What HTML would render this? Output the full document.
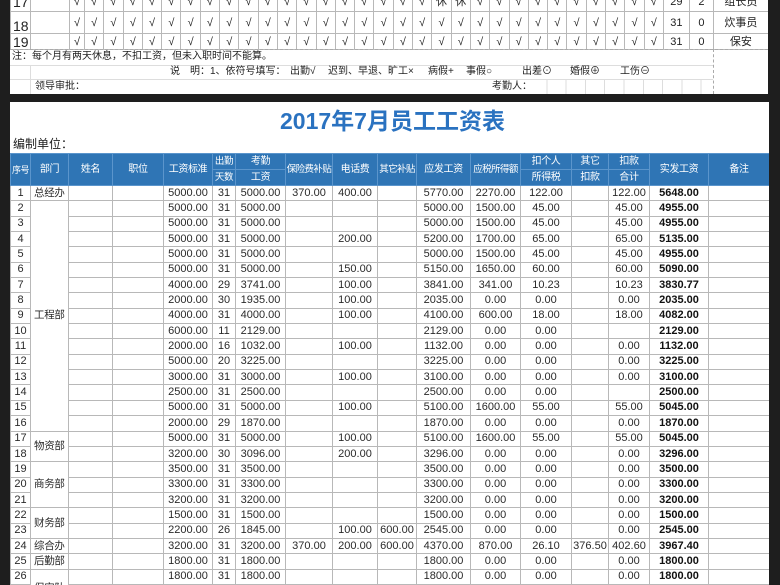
<!DOCTYPE html>
<html><head><meta charset="utf-8">
<style>
*{margin:0;padding:0;box-sizing:border-box}
body{width:780px;height:585px;overflow:hidden;background:#1e1e1e;position:relative;font-family:"Liberation Sans","Noto Sans CJK SC",sans-serif;color:#222}
.sheet{position:absolute;background:#fff;overflow:hidden}
table{border-collapse:collapse;table-layout:fixed;position:absolute}
td{border:1px solid #b8b8b8;text-align:center;padding:0;white-space:nowrap;overflow:hidden}
#top td{font-size:11px;line-height:14px}
#top td.n{font-size:14px;text-align:left;padding-left:2px}
#sal td{font-size:11px;height:15.35px;line-height:13px;color:#2a2a2a}
#sal th{background:#2f75b5;color:#fff;font-weight:normal;font-size:10px;letter-spacing:-0.4px;border:1px solid #5b95cc;height:16px;line-height:14px;padding:0;white-space:nowrap;overflow:hidden}
#sal td.b{font-weight:bold;color:#111}
#sal td.l{text-align:left;padding-left:3px;font-size:10.5px;letter-spacing:-0.3px}
.t{position:absolute;font-size:10px;white-space:nowrap;line-height:14px}
</style></head><body>

<div class="sheet" style="left:10px;top:0;width:758px;height:94px">
<table id="top" style="left:0;top:-8px;width:758px">
<colgroup><col style="width:20px"><col style="width:39px"><col style="width:15px">
<col span="30" style="width:19.3px"><col style="width:26px"><col style="width:24px"><col style="width:55px"></colgroup>
<tr style="height:19px"><td class="n">17</td><td></td><td>√</td><td>√</td><td>√</td><td>√</td><td>√</td><td>√</td><td>√</td><td>√</td><td>√</td><td>√</td><td>√</td><td>√</td><td>√</td><td>√</td><td>√</td><td>√</td><td>√</td><td>√</td><td>√</td><td>休</td><td>休</td><td>√</td><td>√</td><td>√</td><td>√</td><td>√</td><td>√</td><td>√</td><td>√</td><td>√</td><td>√</td><td>29</td><td>2</td><td>组长员</td></tr>
<tr style="height:22px"><td class="n" style="padding-top:6px">18</td><td></td><td>√</td><td>√</td><td>√</td><td>√</td><td>√</td><td>√</td><td>√</td><td>√</td><td>√</td><td>√</td><td>√</td><td>√</td><td>√</td><td>√</td><td>√</td><td>√</td><td>√</td><td>√</td><td>√</td><td>√</td><td>√</td><td>√</td><td>√</td><td>√</td><td>√</td><td>√</td><td>√</td><td>√</td><td>√</td><td>√</td><td>√</td><td>31</td><td>0</td><td>炊事员</td></tr>
<tr style="height:16px"><td class="n">19</td><td></td><td>√</td><td>√</td><td>√</td><td>√</td><td>√</td><td>√</td><td>√</td><td>√</td><td>√</td><td>√</td><td>√</td><td>√</td><td>√</td><td>√</td><td>√</td><td>√</td><td>√</td><td>√</td><td>√</td><td>√</td><td>√</td><td>√</td><td>√</td><td>√</td><td>√</td><td>√</td><td>√</td><td>√</td><td>√</td><td>√</td><td>√</td><td>31</td><td>0</td><td>保安</td></tr>
</table>
<div style="position:absolute;left:0;top:49px;width:758px;border-top:1px dashed #aaa"></div>
<div style="position:absolute;left:703px;top:49px;height:45px;border-left:1px dashed #aaa"></div>
<div style="position:absolute;left:0;top:65px;width:703px;border-top:1px solid #ddd"></div>
<div style="position:absolute;left:0;top:79px;width:703px;border-top:1px solid #ddd"></div>
<div style="position:absolute;left:20px;top:65px;height:29px;border-left:1px solid #ddd"></div>
<div style="position:absolute;left:518px;top:79px;width:185px;height:15px;background:repeating-linear-gradient(90deg,transparent 0,transparent 18.3px,#ddd 18.3px,#ddd 19.3px)"></div>
<div class="t" style="left:2px;top:50px">注：每个月有两天休息，不扣工资，但未入职时间不能算。</div>
<div class="t" style="left:160px;top:65px">说　明：1、依符号填写：</div>
<div class="t" style="left:280px;top:65px">出勤√</div>
<div class="t" style="left:318px;top:65px">迟到、早退、旷工×</div>
<div class="t" style="left:418px;top:65px">病假+</div>
<div class="t" style="left:456px;top:65px">事假○</div>
<div class="t" style="left:512px;top:65px">出差⊙</div>
<div class="t" style="left:560px;top:65px">婚假⊕</div>
<div class="t" style="left:610px;top:65px">工伤⊖</div>
<div class="t" style="left:25px;top:80px">领导审批：</div>
<div class="t" style="left:482px;top:80px">考勤人：</div>
</div>

<div class="sheet" style="left:10px;top:102px;width:759px;height:483px">
<div style="position:absolute;left:0;width:759px;top:4px;text-align:center;font-size:23px;font-weight:bold;color:#2a72c0;line-height:30px;padding-left:6px">2017年7月员工工资表</div>
<div class="t" style="left:3px;top:35px;font-size:12px">编制单位：</div>
<table id="sal" style="left:0;top:51px;width:759px">
<colgroup><col style="width:20px"><col style="width:38px"><col style="width:44px"><col style="width:51px"><col style="width:49px"><col style="width:23px"><col style="width:50px"><col style="width:47px"><col style="width:45px"><col style="width:39px"><col style="width:54px"><col style="width:50px"><col style="width:51px"><col style="width:37px"><col style="width:41px"><col style="width:59px"><col style="width:61px"></colgroup>
<tr><th rowspan="2" style="font-size:9px;letter-spacing:-0.5px">序号</th><th rowspan="2">部门</th><th rowspan="2">姓名</th><th rowspan="2">职位</th><th rowspan="2">工资标准</th><th style="font-size:9.5px">出勤</th><th>考勤</th><th rowspan="2" style="font-size:9.5px;letter-spacing:-0.6px">保险费补贴</th><th rowspan="2">电话费</th><th rowspan="2" style="font-size:9.5px;letter-spacing:-0.6px">其它补贴</th><th rowspan="2">应发工资</th><th rowspan="2" style="font-size:9.5px;letter-spacing:-0.6px">应税所得额</th><th>扣个人</th><th>其它</th><th>扣款</th><th rowspan="2">实发工资</th><th rowspan="2">备注</th></tr>
<tr><th style="font-size:9.5px">天数</th><th>工资</th><th>所得税</th><th>扣款</th><th>合计</th></tr>
<tr><td>1</td><td class="l">总经办</td><td></td><td></td><td>5000.00</td><td>31</td><td>5000.00</td><td>370.00</td><td>400.00</td><td></td><td>5770.00</td><td>2270.00</td><td>122.00</td><td></td><td>122.00</td><td class="b">5648.00</td><td></td></tr>
<tr><td>2</td><td rowspan="15" class="l">工程部</td><td></td><td></td><td>5000.00</td><td>31</td><td>5000.00</td><td></td><td></td><td></td><td>5000.00</td><td>1500.00</td><td>45.00</td><td></td><td>45.00</td><td class="b">4955.00</td><td></td></tr>
<tr><td>3</td><td></td><td></td><td>5000.00</td><td>31</td><td>5000.00</td><td></td><td></td><td></td><td>5000.00</td><td>1500.00</td><td>45.00</td><td></td><td>45.00</td><td class="b">4955.00</td><td></td></tr>
<tr><td>4</td><td></td><td></td><td>5000.00</td><td>31</td><td>5000.00</td><td></td><td>200.00</td><td></td><td>5200.00</td><td>1700.00</td><td>65.00</td><td></td><td>65.00</td><td class="b">5135.00</td><td></td></tr>
<tr><td>5</td><td></td><td></td><td>5000.00</td><td>31</td><td>5000.00</td><td></td><td></td><td></td><td>5000.00</td><td>1500.00</td><td>45.00</td><td></td><td>45.00</td><td class="b">4955.00</td><td></td></tr>
<tr><td>6</td><td></td><td></td><td>5000.00</td><td>31</td><td>5000.00</td><td></td><td>150.00</td><td></td><td>5150.00</td><td>1650.00</td><td>60.00</td><td></td><td>60.00</td><td class="b">5090.00</td><td></td></tr>
<tr><td>7</td><td></td><td></td><td>4000.00</td><td>29</td><td>3741.00</td><td></td><td>100.00</td><td></td><td>3841.00</td><td>341.00</td><td>10.23</td><td></td><td>10.23</td><td class="b">3830.77</td><td></td></tr>
<tr><td>8</td><td></td><td></td><td>2000.00</td><td>30</td><td>1935.00</td><td></td><td>100.00</td><td></td><td>2035.00</td><td>0.00</td><td>0.00</td><td></td><td>0.00</td><td class="b">2035.00</td><td></td></tr>
<tr><td>9</td><td></td><td></td><td>4000.00</td><td>31</td><td>4000.00</td><td></td><td>100.00</td><td></td><td>4100.00</td><td>600.00</td><td>18.00</td><td></td><td>18.00</td><td class="b">4082.00</td><td></td></tr>
<tr><td>10</td><td></td><td></td><td>6000.00</td><td>11</td><td>2129.00</td><td></td><td></td><td></td><td>2129.00</td><td>0.00</td><td>0.00</td><td></td><td></td><td class="b">2129.00</td><td></td></tr>
<tr><td>11</td><td></td><td></td><td>2000.00</td><td>16</td><td>1032.00</td><td></td><td>100.00</td><td></td><td>1132.00</td><td>0.00</td><td>0.00</td><td></td><td>0.00</td><td class="b">1132.00</td><td></td></tr>
<tr><td>12</td><td></td><td></td><td>5000.00</td><td>20</td><td>3225.00</td><td></td><td></td><td></td><td>3225.00</td><td>0.00</td><td>0.00</td><td></td><td>0.00</td><td class="b">3225.00</td><td></td></tr>
<tr><td>13</td><td></td><td></td><td>3000.00</td><td>31</td><td>3000.00</td><td></td><td>100.00</td><td></td><td>3100.00</td><td>0.00</td><td>0.00</td><td></td><td>0.00</td><td class="b">3100.00</td><td></td></tr>
<tr><td>14</td><td></td><td></td><td>2500.00</td><td>31</td><td>2500.00</td><td></td><td></td><td></td><td>2500.00</td><td>0.00</td><td>0.00</td><td></td><td></td><td class="b">2500.00</td><td></td></tr>
<tr><td>15</td><td></td><td></td><td>5000.00</td><td>31</td><td>5000.00</td><td></td><td>100.00</td><td></td><td>5100.00</td><td>1600.00</td><td>55.00</td><td></td><td>55.00</td><td class="b">5045.00</td><td></td></tr>
<tr><td>16</td><td></td><td></td><td>2000.00</td><td>29</td><td>1870.00</td><td></td><td></td><td></td><td>1870.00</td><td>0.00</td><td>0.00</td><td></td><td>0.00</td><td class="b">1870.00</td><td></td></tr>
<tr><td>17</td><td rowspan="2" class="l">物资部</td><td></td><td></td><td>5000.00</td><td>31</td><td>5000.00</td><td></td><td>100.00</td><td></td><td>5100.00</td><td>1600.00</td><td>55.00</td><td></td><td>55.00</td><td class="b">5045.00</td><td></td></tr>
<tr><td>18</td><td></td><td></td><td>3200.00</td><td>30</td><td>3096.00</td><td></td><td>200.00</td><td></td><td>3296.00</td><td>0.00</td><td>0.00</td><td></td><td>0.00</td><td class="b">3296.00</td><td></td></tr>
<tr><td>19</td><td rowspan="3" class="l">商务部</td><td></td><td></td><td>3500.00</td><td>31</td><td>3500.00</td><td></td><td></td><td></td><td>3500.00</td><td>0.00</td><td>0.00</td><td></td><td>0.00</td><td class="b">3500.00</td><td></td></tr>
<tr><td>20</td><td></td><td></td><td>3300.00</td><td>31</td><td>3300.00</td><td></td><td></td><td></td><td>3300.00</td><td>0.00</td><td>0.00</td><td></td><td>0.00</td><td class="b">3300.00</td><td></td></tr>
<tr><td>21</td><td></td><td></td><td>3200.00</td><td>31</td><td>3200.00</td><td></td><td></td><td></td><td>3200.00</td><td>0.00</td><td>0.00</td><td></td><td>0.00</td><td class="b">3200.00</td><td></td></tr>
<tr><td>22</td><td rowspan="2" class="l">财务部</td><td></td><td></td><td>1500.00</td><td>31</td><td>1500.00</td><td></td><td></td><td></td><td>1500.00</td><td>0.00</td><td>0.00</td><td></td><td>0.00</td><td class="b">1500.00</td><td></td></tr>
<tr><td>23</td><td></td><td></td><td>2200.00</td><td>26</td><td>1845.00</td><td></td><td>100.00</td><td>600.00</td><td>2545.00</td><td>0.00</td><td>0.00</td><td></td><td>0.00</td><td class="b">2545.00</td><td></td></tr>
<tr><td>24</td><td class="l">综合办</td><td></td><td></td><td>3200.00</td><td>31</td><td>3200.00</td><td>370.00</td><td>200.00</td><td>600.00</td><td>4370.00</td><td>870.00</td><td>26.10</td><td>376.50</td><td>402.60</td><td class="b">3967.40</td><td></td></tr>
<tr><td>25</td><td class="l">后勤部</td><td></td><td></td><td>1800.00</td><td>31</td><td>1800.00</td><td></td><td></td><td></td><td>1800.00</td><td>0.00</td><td>0.00</td><td></td><td>0.00</td><td class="b">1800.00</td><td></td></tr>
<tr><td>26</td><td rowspan="2" class="l" style="vertical-align:top;padding-top:12px">保安队</td><td></td><td></td><td>1800.00</td><td>31</td><td>1800.00</td><td></td><td></td><td></td><td>1800.00</td><td>0.00</td><td>0.00</td><td></td><td>0.00</td><td class="b">1800.00</td><td></td></tr>
<tr><td>27</td><td></td><td></td><td>1800.00</td><td>31</td><td>1800.00</td><td></td><td></td><td></td><td>1800.00</td><td>0.00</td><td>0.00</td><td></td><td>0.00</td><td class="b">1800.00</td><td></td></tr>
</table>
</div>
</body></html>
